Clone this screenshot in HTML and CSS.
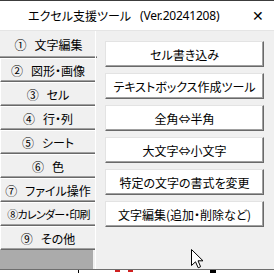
FILE: index.html
```html
<!DOCTYPE html>
<html lang="ja">
<head>
    <meta charset="UTF-8">
    <meta name="viewport" content="width=device-width, initial-scale=1.0">
    <title>エクセル支援ツール</title>
    <link rel="stylesheet" href="styles.css">
</head>
<body>

    <div class="window">
        <div class="titlebar">
            <span class="title">エクセル支援ツール</span>
            <span class="version">(Ver.20241208)</span>
            <span class="close">&#x2715;</span>
        </div>

        <div class="main">
            <div class="tabs">
                <div class="tab selected"><span class="num">①</span>文字編集</div>
                <div class="tab"><span class="num">②</span>図形・画像</div>
                <div class="tab"><span class="num">③</span>セル</div>
                <div class="tab"><span class="num">④</span>行・列</div>
                <div class="tab"><span class="num">⑤</span>シート</div>
                <div class="tab"><span class="num">⑥</span>色</div>
                <div class="tab"><span class="num">⑦</span>ファイル操作</div>
                <div class="tab tight">⑧カレンダー・印刷</div>
                <div class="tab"><span class="num">⑨</span>その他</div>
                <div class="tabs-rest"></div>
            </div>

            <div class="panel">
                <button class="tool-btn">セル書き込み</button>
                <button class="tool-btn">テキストボックス作成ツール</button>
                <button class="tool-btn">全角⇔半角</button>
                <button class="tool-btn">大文字⇔小文字</button>
                <button class="tool-btn">特定の文字の書式を変更</button>
                <button class="tool-btn">文字編集(追加・削除など)</button>
            </div>
        </div>

        <div class="bottom-strip">
            <span class="mark black-line"></span>
            <span class="mark red r1"></span>
            <span class="mark red r2"></span>
            <span class="mark black"></span>
        </div>
    </div>

    <!-- mouse pointer -->
    <svg class="cursor" width="13" height="20" viewBox="0 0 13 20">
        <path d="M0.5 0.5 L0.5 16.5 L4.5 12.8 L7.2 18.8 L9.6 17.7 L7 11.8 L12 11.8 Z" fill="#fff" stroke="#000" stroke-width="1"/>
    </svg>

</body>
</html>
```

FILE: styles.css
```css
* {
    box-sizing: border-box;
}

body {
    margin: 0;
    width: 274px;
    height: 273px;
    overflow: hidden;
    font-family: "Noto Sans CJK JP", sans-serif;
    font-feature-settings: "palt";
    background-color: #f0f0f0;
    position: relative;
}

.window {
    display: flex;
    flex-direction: column;
    height: 273px;
}

.titlebar {
    height: 31px;
    background: #ffffff;
    border-top: 1px solid #3c3c3c;
    border-bottom: 1px solid #e5e5e5;
    display: flex;
    align-items: center;
    padding-left: 28px;
    font-size: 12px;
    color: #000;
}

.version {
    font-family: "Noto Sans", sans-serif;
    margin-left: 9px;
    letter-spacing: -0.2px;
}

.close {
    margin-left: auto;
    margin-right: 10px;
    font-family: "DejaVu Sans", sans-serif;
    font-size: 14px;
    font-weight: 300;
}

.main {
    flex: 1;
    display: flex;
}

.tabs {
    width: 95px;
    display: flex;
    flex-direction: column;
    background: #f0f0f0;
}

.tab {
    height: 24px;
    display: flex;
    align-items: center;
    justify-content: center;
    font-size: 12px;
    color: #000;
    white-space: nowrap;
    background: #f0f0f0;
    border-top: 1px solid #ffffff;
    border-left: 1px solid #ffffff;
    border-bottom: 1px solid #696969;
    box-shadow: inset 0 -1px #a0a0a0;
}

.tab .num {
    margin-right: 8px;
}

.tab.tight {
    letter-spacing: -0.7px;
    font-size: 11px;
    padding-left: 1px;
}

.tab.selected {
    height: 27px;
    width: 97px;
    border-top: none;
    border-left: none;
}

.tabs-rest {
    flex: 1;
    background: #ababab;
    border-right: 2px solid #f0f0f0;
}

.panel {
    flex: 1;
    display: flex;
    flex-direction: column;
    gap: 6px;
    padding: 10px 0 0 9px;
    border-left: 1px solid #ffffff;
}

.tool-btn {
    width: 159px;
    height: 26px;
    background: #ffffff;
    border: 1px solid;
    border-color: #e3e3e3 #696969 #696969 #e3e3e3;
    box-shadow: inset -1px -1px #a0a0a0;
    font-family: "Noto Sans CJK JP", sans-serif;
    font-feature-settings: "palt";
    font-size: 12px;
    color: #000;
    padding: 0;
    white-space: nowrap;
}

.bottom-strip {
    height: 4px;
    background: #ffffff;
    border-top: 1px solid #6e6e6e;
    position: relative;
}

.mark {
    position: absolute;
    top: 0;
    height: 3px;
}

.red {
    height: 2px;
    width: 5px;
    background: #d02020;
}

.r1 {
    left: 115px;
}

.r2 {
    left: 128px;
}

.black-line {
    left: 78px;
    width: 1px;
    background: #000;
}

.black {
    left: 210px;
    width: 6px;
    background: #000;
}

.cursor {
    position: absolute;
    left: 191px;
    top: 249px;
}
```
